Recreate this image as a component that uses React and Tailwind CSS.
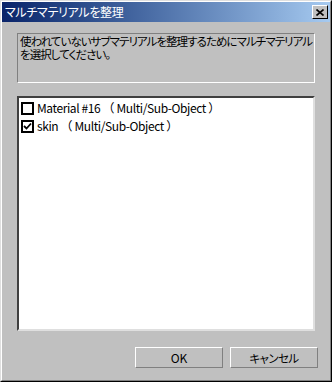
export default function App() {
  const font = { fontFamily: '"Noto Sans CJK JP", "Noto Sans", sans-serif' };
  return (
    <div className="w-[332px] h-[382px] bg-[#c0c0c0] border-t border-l border-[#dfdfdf] border-r border-b border-r-black border-b-black" style={font}>
      <div className="w-full h-full flex flex-col border-t border-l border-white border-r border-b border-r-[#808080] border-b-[#808080]">
        <div className="h-[20px] flex items-center justify-between bg-gradient-to-r from-[#0a246a] to-[#a6caf0] pl-[3px] pr-[2px]">
          <span className="text-white text-[12px] leading-[12px] tracking-[-0.3px] [font-feature-settings:'palt']">マルチマテリアルを整理</span>
          <div className="w-[16px] h-[14px] bg-[#c0c0c0] border-t border-l border-white border-r border-b border-r-black border-b-black flex items-center justify-center">
            <svg width="8" height="7" viewBox="0 0 8 7">
              <path d="M0.5 0.5 L7.5 6.5 M7.5 0.5 L0.5 6.5" stroke="black" strokeWidth="1.6" fill="none" />
            </svg>
          </div>
        </div>
        <div className="mt-[11px] mx-[15px] h-[50px] border-t border-l border-[#808080] border-r border-b border-r-white border-b-white pl-[2px] pt-[1px]">
          <div className="text-black text-[11.5px] leading-[13px] tracking-[-0.95px] whitespace-nowrap [font-feature-settings:'palt'] flex flex-col">
            <span>使われていないサブマテリアルを整理するためにマルチマテリアル</span>
            <span>を選択してください。</span>
          </div>
        </div>
        <div className="mt-[13px] mx-[15px] h-[235px] bg-white border-t-2 border-l-2 border-t-[#404040] border-l-[#404040] border-r-2 border-b-2 border-r-[#dfdfdf] border-b-[#dfdfdf] pl-[2px] pt-[1px]">
          {[
            { label: 'Material #16 （ Multi/Sub-Object ）', checked: false },
            { label: 'skin （ Multi/Sub-Object ）', checked: true },
          ].map((it) => (
            <div key={it.label} className="h-[18px] flex items-center gap-[3px]">
              <div className="w-[13px] h-[13px] border-2 border-black bg-white flex items-center justify-center">
                {it.checked && (
                  <svg width="9" height="9" viewBox="0 0 9 9">
                    <path d="M1 4 L3.5 6.5 L8 1.5" stroke="black" strokeWidth="1.8" fill="none" />
                  </svg>
                )}
              </div>
              <span className="text-black text-[12px] leading-[12px] whitespace-nowrap tracking-[-0.4px]">{it.label}</span>
            </div>
          ))}
        </div>
        <div className="mt-[16px] mr-[12px] flex justify-end gap-[7px]">
          <button className="w-[88px] h-[21px] bg-[#c0c0c0] border-t border-l border-white border-r border-b border-r-[#808080] border-b-[#808080] text-black text-[12px] leading-[12px]">OK</button>
          <button className="w-[88px] h-[21px] bg-[#c0c0c0] border-t border-l border-white border-r border-b border-r-[#808080] border-b-[#808080] text-black text-[11.5px] leading-[12px] tracking-[-0.6px] [font-feature-settings:'palt']">キャンセル</button>
        </div>
      </div>
    </div>
  );
}
